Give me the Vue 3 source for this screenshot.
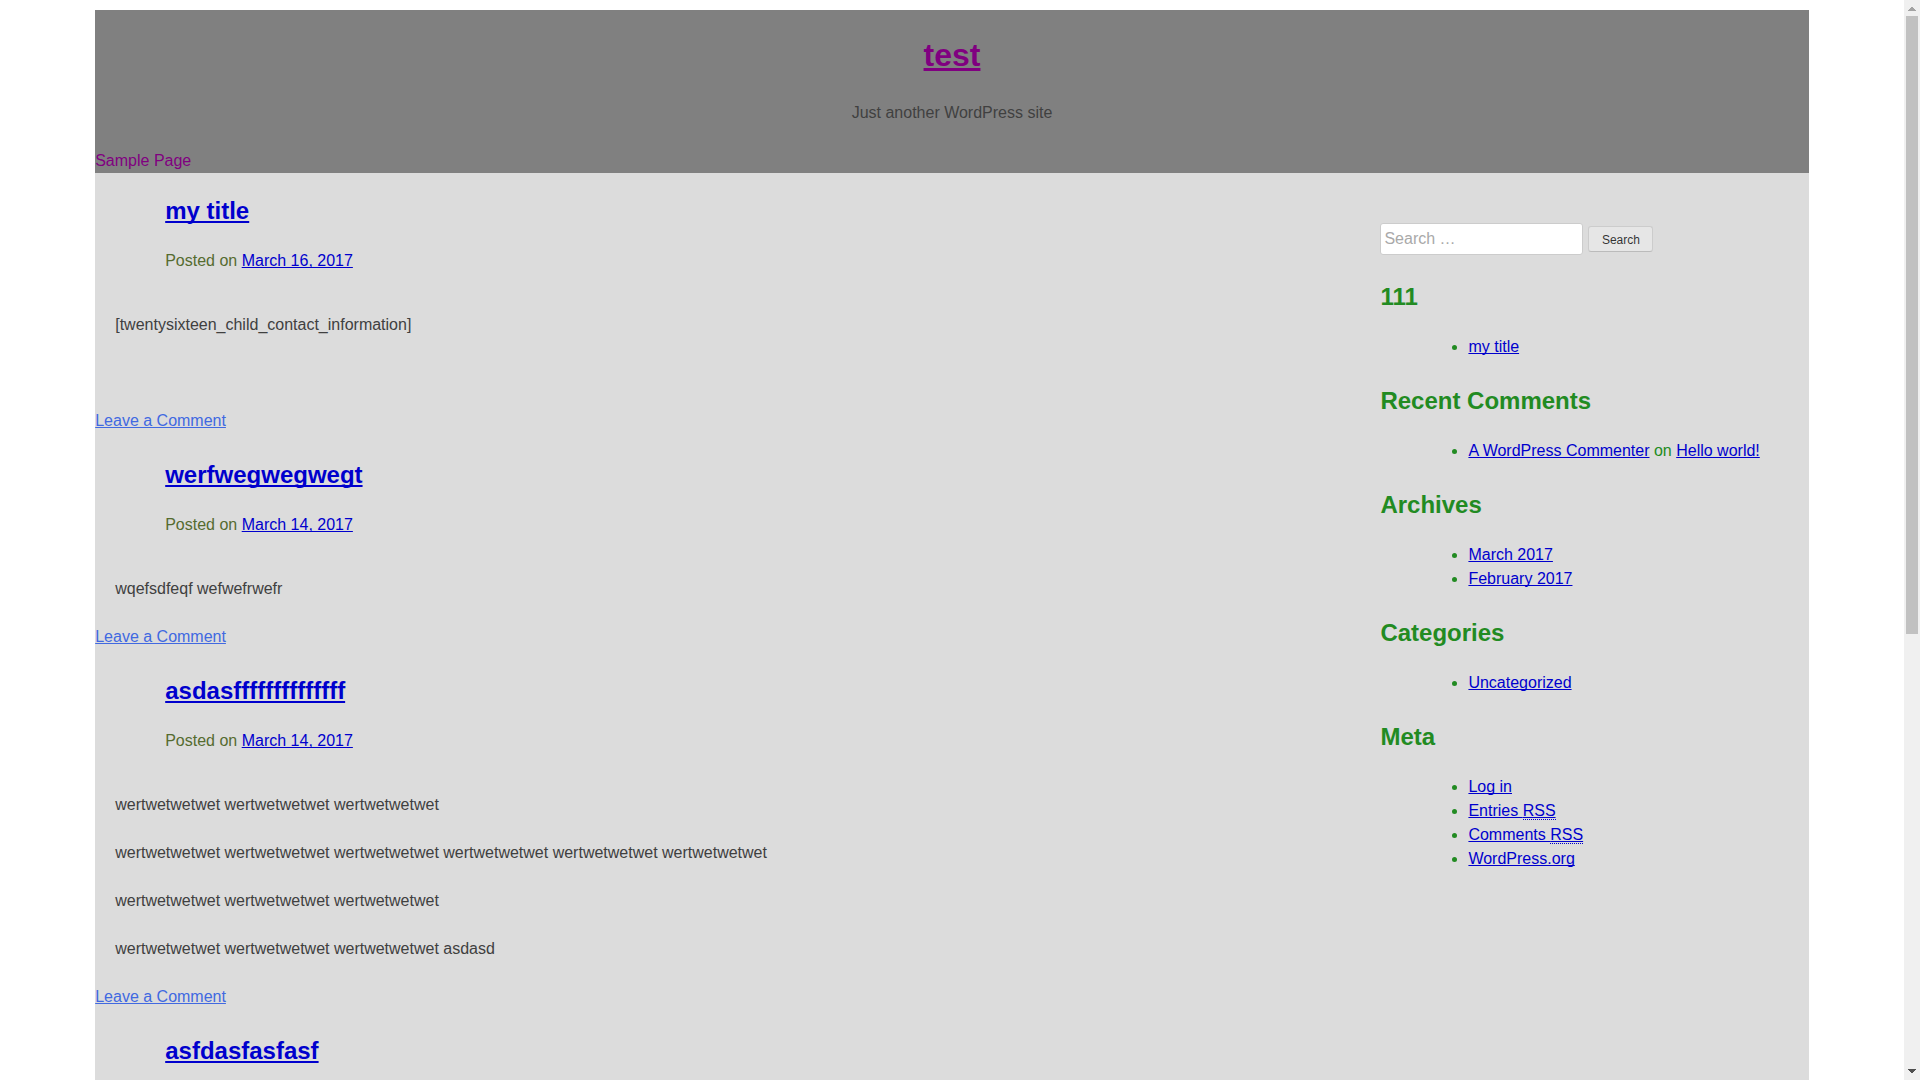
<script setup>
const posts = [
  {
    title: 'my title',
    date: 'March 16, 2017',
    paragraphs: ['[twentysixteen_child_contact_information]', ''],
  },
  {
    title: 'werfwegwegwegt',
    date: 'March 14, 2017',
    paragraphs: ['wqefsdfeqf wefwefrwefr'],
  },
  {
    title: 'asdasffffffffffffff',
    date: 'March 14, 2017',
    paragraphs: [
      'wertwetwetwet wertwetwetwet wertwetwetwet',
      'wertwetwetwet wertwetwetwet wertwetwetwet wertwetwetwet wertwetwetwet wertwetwetwet',
      'wertwetwetwet wertwetwetwet wertwetwetwet',
      'wertwetwetwet wertwetwetwet wertwetwetwet asdasd',
    ],
  },
  { title: 'asfdasfasfasf' },
]
</script>

<template>
  <div class="window">
    <div class="viewport">
      <div class="site">
        <header class="site-header">
          <h1 class="site-title"><a href="#">test</a></h1>
          <p class="site-description">Just another WordPress site</p>
          <nav class="site-nav"><a href="#">Sample Page</a></nav>
        </header>

        <div class="site-content">
          <main class="posts">
            <article v-for="post in posts" :key="post.title" class="post">
              <header class="post-header">
                <h2><a href="#">{{ post.title }}</a></h2>
                <div v-if="post.date" class="post-meta">Posted on <a href="#">{{ post.date }}</a></div>
              </header>
              <div v-if="post.paragraphs" class="post-content">
                <p v-for="(text, i) in post.paragraphs" :key="i">{{ text }}</p>
              </div>
              <footer v-if="post.paragraphs" class="post-footer"><a href="#">Leave a Comment</a></footer>
            </article>
          </main>

          <aside class="sidebar">
            <form class="search" role="search" @submit.prevent>
              <input type="search" placeholder="Search …" aria-label="Search" />
              <button type="submit">Search</button>
            </form>
            <section>
              <h2>111</h2>
              <ul>
                <li><a href="#">my title</a></li>
              </ul>
            </section>
            <section>
              <h2>Recent Comments</h2>
              <ul>
                <li><a href="#">A WordPress Commenter</a> on <a href="#">Hello world!</a></li>
              </ul>
            </section>
            <section>
              <h2>Archives</h2>
              <ul>
                <li><a href="#">March 2017</a></li>
                <li><a href="#">February 2017</a></li>
              </ul>
            </section>
            <section>
              <h2>Categories</h2>
              <ul>
                <li><a href="#">Uncategorized</a></li>
              </ul>
            </section>
            <section>
              <h2>Meta</h2>
              <ul>
                <li><a href="#">Log in</a></li>
                <li><a href="#">Entries <abbr>RSS</abbr></a></li>
                <li><a href="#">Comments <abbr>RSS</abbr></a></li>
                <li><a href="#">WordPress.org</a></li>
              </ul>
            </section>
          </aside>
        </div>
      </div>
    </div>

    <div class="scrollbar" aria-hidden="true">
      <svg width="16" height="16" viewBox="0 0 16 16" shape-rendering="crispEdges">
        <path d="M7 7h2v1h1v1h1v1h1v1H4v-1h1V9h1V8h1z" fill="#a3a3a3" />
      </svg>
      <div class="track"><div class="thumb"></div></div>
      <svg width="16" height="16" viewBox="0 0 16 16" shape-rendering="crispEdges">
        <path d="M4 5h8v1h-1v1h-1v1H9v1H7V8H6V7H5V6H4z" fill="#505050" />
      </svg>
    </div>
  </div>
</template>

<style>
body {
  margin: 0;
  background: #fff;
}
</style>

<style scoped>
.window {
  display: flex;
  height: 100vh;
  color: #404040;
  font: 16px/24px "Liberation Sans", Arial, sans-serif;
}

.viewport {
  flex: 1;
  min-width: 0;
  overflow-y: auto;
  scrollbar-width: none;
  display: flex;
  flex-direction: column;
}

.site {
  flex: 1 0 auto;
  display: flex;
  flex-direction: column;
  margin: 10px 5% 0;
  background: gainsboro;
}

a {
  color: mediumblue;
  text-decoration-skip-ink: none;
}

h1,
h2,
p,
ul {
  margin: 0;
}

h2 {
  font-size: 24px;
  line-height: 36px;
  margin-bottom: 20px;
}

.site-header {
  background: gray;
  padding-top: 21px;
}

.site-header a {
  color: purple;
}

.site-title {
  margin-bottom: 22px;
  font-size: 32px;
  line-height: 48px;
  text-align: center;
}

.site-description {
  margin-bottom: 24px;
  text-align: center;
}

.site-nav a {
  display: block;
  text-decoration: none;
}

.site-content {
  flex: 1;
  display: flex;
}

.posts {
  flex: 3 1 0;
  min-width: 0;
  padding-top: 20px;
}

.post {
  margin-bottom: 24px;
}

.post-header {
  padding-left: 70px;
}

.post-meta {
  color: darkolivegreen;
}

.post-content {
  padding: 40px 20px 0;
}

.post-content p {
  min-height: 24px;
  margin-bottom: 24px;
}

.post-footer a {
  color: royalblue;
}

.sidebar {
  flex: 1 1 0;
  min-width: 0;
  padding-top: 50px;
  color: forestgreen;
}

.search {
  display: flex;
  align-items: center;
  gap: 5px;
  margin-bottom: 24px;
}

.search input {
  appearance: none;
  box-sizing: border-box;
  width: 203px;
  height: 32px;
  padding: 3px;
  border: 1px solid #ccc;
  border-radius: 3px;
  background: #fff;
  color: #666;
  font: inherit;
}

.search input::placeholder {
  color: #a9a9a9;
}

.search button {
  box-sizing: border-box;
  min-width: 65px;
  height: 26px;
  padding: 2px 12px 0;
  border: 1px solid;
  border-color: #ccc #ccc #bbb;
  border-radius: 3px;
  background: #e6e6e6;
  color: rgba(0, 0, 0, 0.8);
  font: 12px/12px "Liberation Sans", Arial, sans-serif;
}

.sidebar ul {
  margin-bottom: 24px;
  padding-left: 88px;
  list-style: disc;
}

abbr {
  border-bottom: 1px dotted;
}

.scrollbar {
  flex: none;
  display: flex;
  flex-direction: column;
  width: 16px;
  background: #f0f0f0;
}

.track {
  flex: 1;
  padding: 0 2px;
}

.thumb {
  height: 59%;
  background: #c1c1c1;
}
</style>
